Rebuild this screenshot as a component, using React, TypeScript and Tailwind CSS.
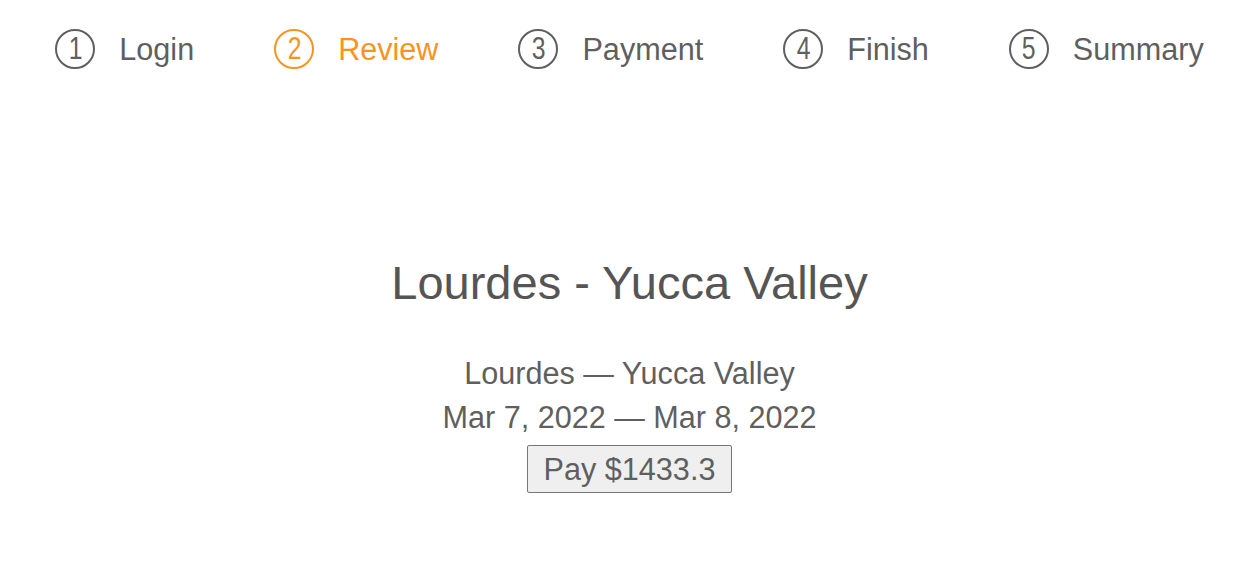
const steps = [
  { n: 1, label: "Login" },
  { n: 2, label: "Review", active: true },
  { n: 3, label: "Payment" },
  { n: 4, label: "Finish" },
  { n: 5, label: "Summary" },
];

function Step({ n, label, active }: { n: number; label: string; active?: boolean }) {
  const color = active ? "text-[#f7941d] border-[#f7941d]" : "text-[#5f5f5f] border-[#5f5f5f]";
  return (
    <div className={`flex items-center gap-[24px] ${active ? "text-[#f7941d]" : "text-[#5f5f5f]"}`}>
      <span
        className={`flex h-[40px] w-[40px] items-center justify-center rounded-full border-2 text-[31px] leading-none ${color}`}
      >
        <span className="inline-block scale-x-[0.8]">{n}</span>
      </span>
      <span className="pt-[1px] text-[30.6px] leading-[40px]">{label}</span>
    </div>
  );
}

export default function App() {
  return (
    <div className="min-h-[571px] w-full bg-white font-['Liberation_Sans',Arial,sans-serif] text-[#555]">
      <nav className="flex justify-center gap-[80px] pt-[28px]">
        {steps.map((s) => (
          <Step key={s.n} {...s} />
        ))}
      </nav>

      <main className="flex flex-col items-center">
        <h1 className="mt-[187px] text-[47px] leading-[53px] font-normal">Lourdes - Yucca Valley</h1>
        <div className="mt-[42px] flex flex-col items-center text-[30.6px] leading-[44px] text-[#5f5f5f]">
          <p>Lourdes — Yucca Valley</p>
          <p>Mar 7, 2022 — Mar 8, 2022</p>
          <button className="mt-[6px] h-[48px] rounded-[2px] border border-[#767676] bg-[#efefef] px-[16px] text-[30.6px] leading-none text-[#5f5f5f]">
            Pay $1433.3
          </button>
        </div>
      </main>
    </div>
  );
}
